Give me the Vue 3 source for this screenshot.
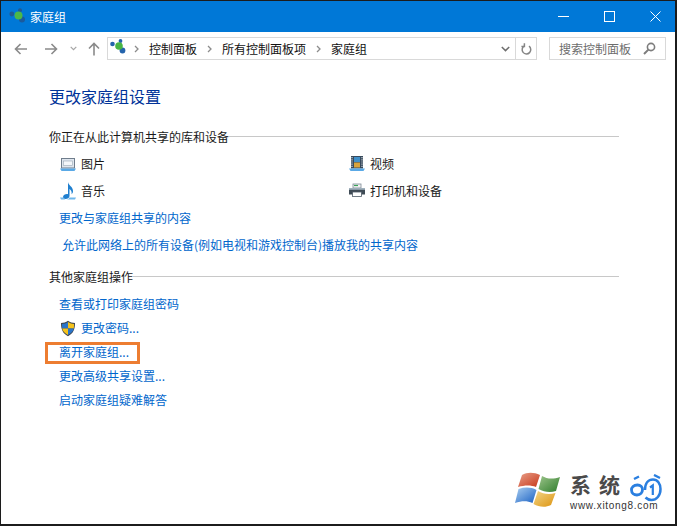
<script setup>
const crumbs = ['控制面板', '所有控制面板项', '家庭组']
</script>

<template>
  <div class="window">
    <header class="titlebar">
      <div class="title">
        <svg class="hg" width="18" height="16" viewBox="0 0 18 16">
          <circle cx="2.800" cy="6" r="2.400" fill="#1f5a94" />
          <circle cx="11" cy="2.300" r="2" fill="#1f5a94" />
          <circle cx="13" cy="11.500" r="3" fill="#1b5a9c" />
          <circle cx="9.500" cy="7.500" r="4" fill="#4cb848" />
        </svg>
        <span>家庭组</span>
      </div>
      <div class="controls">
        <div class="ctl"><svg width="11" height="11" viewBox="0 0 11 11"><path d="M0 5.500H11" stroke="#fff" /></svg></div>
        <div class="ctl"><svg width="11" height="11" viewBox="0 0 11 11"><rect x=".5" y=".5" width="10" height="10" fill="none" stroke="#fff" /></svg></div>
        <div class="ctl"><svg width="11" height="11" viewBox="0 0 11 11"><path d="M.5 .5L10.500 10.500M10.500 .5L.5 10.500" stroke="#fff" /></svg></div>
      </div>
    </header>

    <nav class="toolbar">
      <div class="navs">
        <svg width="14" height="12" viewBox="0 0 14 12"><path d="M13 6H1.500M6.500 1L1.500 6L6.500 11" fill="none" stroke="#8a8a8a" stroke-width="1.600" /></svg>
        <svg class="fw" width="14" height="12" viewBox="0 0 14 12"><path d="M1 6H12.500M7.500 1L12.500 6L7.500 11" fill="none" stroke="#8a8a8a" stroke-width="1.600" /></svg>
        <svg class="dn" width="7" height="5" viewBox="0 0 7 5"><path d="M.7 .8L3.500 3.600L6.300 .8" fill="none" stroke="#a5a5a5" stroke-width="1.200" /></svg>
        <svg class="up" width="12" height="14" viewBox="0 0 12 14"><path d="M6 13.500V1.500M1 6.500L6 1.500L11 6.500" fill="none" stroke="#8a8a8a" stroke-width="1.600" /></svg>
      </div>
      <div class="address">
        <svg class="hg2" width="17" height="16" viewBox="0 0 17 16">
          <circle cx="2.500" cy="5" r="2.300" fill="#2464ac" />
          <circle cx="10.500" cy="2" r="1.900" fill="#2464ac" />
          <circle cx="12.500" cy="11.500" r="2.900" fill="#2464ac" />
          <circle cx="9" cy="7" r="3.800" fill="#48b544" />
        </svg>
        <template v-for="c in crumbs" :key="c">
          <svg class="sep" width="5" height="8" viewBox="0 0 5 8"><path d="M1 1L4 4L1 7" fill="none" stroke="#8c8c8c" stroke-width="1.300" /></svg>
          <span class="crumb">{{ c }}</span>
        </template>
        <div class="spacer"></div>
        <svg class="chev" width="9" height="6" viewBox="0 0 9 6"><path d="M.8 1L4.500 4.600L8.200 1" fill="none" stroke="#6e6e6e" stroke-width="1.500" /></svg>
        <div class="refresh">
          <svg width="11" height="13" viewBox="0 0 11 13"><path d="M3.200 3.400A4.300 4.300 0 1 0 8 3.600M3.400 .6V4H.4" transform="translate(0 .6)" fill="none" stroke="#858585" stroke-width="1.500" /></svg>
        </div>
      </div>
      <div class="search">
        <span>搜索控制面板</span>
        <svg width="13" height="13" viewBox="0 0 13 13"><circle cx="8" cy="5" r="3.600" fill="none" stroke="#7d7d7d" stroke-width="1.600" /><path d="M5.400 7.600L1 12" stroke="#7d7d7d" stroke-width="2" /></svg>
      </div>
    </nav>

    <main class="content">
      <h1>更改家庭组设置</h1>

      <div class="section-head"><span>你正在从此计算机共享的库和设备</span><i></i></div>
      <div class="libs">
        <div class="lib">
          <svg width="16" height="16" viewBox="0 0 16 16">
            <rect x="1.500" y="2.500" width="13" height="9.500" fill="#dfe6ee" stroke="#6f7d8c" />
            <rect x="3.500" y="5" width="9" height="4.500" fill="#f4f7fa" stroke="#9aa7b5" stroke-width=".6" />
            <path d="M0 12.500H16L14.500 15H1.500Z" fill="#5aa9e6" />
          </svg>
          <span>图片</span>
        </div>
        <div class="lib">
          <svg width="16" height="16" viewBox="0 0 16 16">
            <rect x="2" y="0" width="12" height="12.500" fill="#384a5c" />
            <rect x="5" y="1" width="6" height="5" fill="#3f8fc9" />
            <rect x="5" y="6.500" width="6" height="5" fill="#d9a33a" />
            <path d="M3 1V12M13 1V12" stroke="#cfd6dd" stroke-width="1.200" stroke-dasharray="1.200 1" />
            <path d="M0 12.500H16L14.500 15H1.500Z" fill="#5aa9e6" />
          </svg>
          <span>视频</span>
        </div>
        <div class="lib">
          <svg width="16" height="18" viewBox="0 0 16 18">
            <path d="M8 0C8.500 3.500 13 4.500 13 9C13 10.500 12.500 11.500 11.500 12.200C12.300 9.500 10.500 7.500 9.500 7V14C9.500 15.800 7.500 17 5.500 17C4 17 3 16.200 3 15C3 13.200 5.200 12 7 12C7.500 12 7.800 12.100 8 12.200Z" fill="#1f7fcf" />
            <path d="M0 15.500H3.500C4 17 5 17.500 6 17.500H1Z" fill="#6fb7ec" />
            <path d="M9.500 15.500H16L15 17.500H6.500C8 17.500 9 16.800 9.500 15.500Z" fill="#6fb7ec" />
          </svg>
          <span>音乐</span>
        </div>
        <div class="lib">
          <svg width="16" height="15" viewBox="0 0 16 15">
            <rect x="4" y="1" width="8" height="4" fill="#f2f2f2" stroke="#7d8a96" stroke-width=".8" />
            <path d="M5 2.500H9" stroke="#3aa35a" stroke-width="1.200" />
            <rect x="0" y="5" width="16" height="6.500" fill="#3f4b55" />
            <rect x="0" y="5" width="16" height="1.800" fill="#9fb0bc" />
            <rect x="3.500" y="9" width="9" height="4.500" fill="#fff" stroke="#4f5b66" stroke-width=".8" />
          </svg>
          <span>打印机和设备</span>
        </div>
      </div>

      <a class="link single">更改与家庭组共享的内容</a>
      <a class="link wide">允许此网络上的所有设备(例如电视和游戏控制台)播放我的共享内容</a>

      <div class="section-head second"><span>其他家庭组操作</span><i></i></div>
      <div class="actions">
        <a class="link">查看或打印家庭组密码</a>
        <a class="link with-icon">
          <svg width="16" height="17" viewBox="0 0 16 17">
            <path d="M8 .8C10 2.200 12.500 3 15 3C15 9 13.500 13.500 8 16.200C2.500 13.500 1 9 1 3C3.500 3 6 2.200 8 .8Z" fill="#40464e" />
            <path d="M8 2V8.500H2.200C2 6.800 2 5.500 2 4C4 3.900 6.200 3.200 8 2Z" fill="#2a74c8" />
            <path d="M8 2C9.800 3.200 12 3.900 14 4C14 5.500 14 6.800 13.800 8.500H8Z" fill="#f5c21b" />
            <path d="M2.200 8.500H8V15C4.500 13.200 2.800 11.200 2.200 8.500Z" fill="#f5c21b" />
            <path d="M8 8.500H13.800C13.200 11.200 11.500 13.200 8 15Z" fill="#2a74c8" />
          </svg>
          <span>更改密码...</span>
        </a>
        <a class="link marked">离开家庭组...</a>
        <a class="link">更改高级共享设置...</a>
        <a class="link">启动家庭组疑难解答</a>
      </div>
    </main>

    <div class="watermark">
      <svg class="flag" width="46" height="36" viewBox="0 0 46 36">
        <defs>
          <linearGradient id="fr" x1="0" y1="0" x2="1" y2="1"><stop offset="0" stop-color="#e8a08a" /><stop offset="1" stop-color="#c8381a" /></linearGradient>
          <linearGradient id="fg" x1="0" y1="0" x2="1" y2="1"><stop offset="0" stop-color="#9cc48a" /><stop offset="1" stop-color="#2f7d2c" /></linearGradient>
          <linearGradient id="fb" x1="0" y1="0" x2="1" y2="1"><stop offset="0" stop-color="#a8cdf0" /><stop offset="1" stop-color="#1b62c4" /></linearGradient>
          <linearGradient id="fy" x1="0" y1="0" x2="1" y2="1"><stop offset="0" stop-color="#f2d68a" /><stop offset="1" stop-color="#dd9410" /></linearGradient>
        </defs>
        <path d="M7 3C12 0 19 0 25 3L21 15C16 13 10 13 3 15Z" fill="url(#fr)" />
        <path d="M27 4C32 7 38 7.500 45 5L41 19C35 21 29 20 23.500 17Z" fill="url(#fg)" />
        <path d="M2.500 17C9 15 15 15 20.500 18L16.500 31C11 28.500 6 28.500 -1 31Z" transform="translate(1 0)" fill="url(#fb)" />
        <path d="M23 19C28 22 34 23 40.500 21L36 33C30 36 24 35 18.500 32Z" fill="url(#fy)" />
      </svg>
      <div class="brand">
        <div class="brand-top">
          <span class="cn">系统</span>
          <svg class="mark" width="32" height="28" viewBox="0 0 32 28">
            <path d="M7.500 11C3.500 11 1.500 13.500 1.500 16C1.500 19 4 21 7 21C10.500 21 12.500 18.500 12.500 15.500C12.500 13 10.500 11 7.500 11Z" fill="none" stroke="#2a7fe0" stroke-width="2.800" />
            <path d="M15 16C15 9 18.500 5.500 23 5.500C27.500 5.500 30.500 9.500 30.500 15C30.500 21.500 26.500 26 21.500 26C19 26 17 25 15.500 23.500" fill="none" stroke="#2a7fe0" stroke-width="2.500" />
            <path d="M20 13.500L22.800 11.500V21" fill="none" stroke="#2a7fe0" stroke-width="2.200" />
            <path d="M4 5L9 2.500M24 1L30 4" stroke="#2a7fe0" stroke-width="2.400" />
          </svg>
        </div>
        <div class="url">www.xitong8.com</div>
      </div>
    </div>
  </div>
</template>

<style scoped>
.window {
  position: relative;
  width: 677px;
  height: 526px;
  box-sizing: border-box;
  border: 1px solid #1c1c1c;
  border-right-width: 2px;
  border-bottom-width: 2px;
  background: #fff;
  overflow: hidden;
  font-family: "Noto Sans CJK SC", "Noto Sans", sans-serif;
  font-size: 12px;
  color: #1a1a1a;
}
.titlebar {
  height: 31px;
  background: #0078d7;
  display: flex;
  align-items: center;
  justify-content: space-between;
  color: #fff;
}
.title {
  display: flex;
  align-items: center;
  gap: 3px;
  padding-left: 8px;
}
.hg { display: block; margin-top: -1px; }
.controls { display: flex; margin-right: -3px; }
.ctl {
  width: 46px;
  height: 31px;
  display: flex;
  align-items: center;
  justify-content: center;
}
.toolbar {
  height: 33px;
  display: flex;
  align-items: center;
}
.navs {
  width: 106px;
  display: flex;
  align-items: center;
  padding-left: 13px;
  box-sizing: border-box;
}
.fw { margin-left: 16px; }
.dn { margin-left: 12px; }
.up { margin-left: 11px; }
.address {
  width: 430px;
  height: 23px;
  box-sizing: border-box;
  border: 1px solid #d9d9d9;
  display: flex;
  align-items: center;
}
.hg2 { margin-left: 2px; margin-right: 7px; margin-top: -4px; }
.sep { margin-right: 10px; }
.crumb { margin-right: 10px; color: #111; }
.spacer { flex: 1; }
.chev { margin-right: 5px; }
.refresh {
  width: 20px;
  height: 100%;
  border-left: 1px solid #d9d9d9;
  display: flex;
  align-items: center;
  justify-content: center;
}
.search {
  width: 117px;
  height: 23px;
  box-sizing: border-box;
  margin-left: 12px;
  border: 1px solid #d9d9d9;
  display: flex;
  align-items: center;
  justify-content: space-between;
  padding: 0 9px;
  color: #6d6d6d;
}
.content {
  padding: 19px 0 0 48px;
  width: 570px;
}
h1 {
  margin: 0;
  height: 24px;
  line-height: 24px;
  font-size: 16px;
  font-weight: 400;
  color: #003399;
}
.section-head {
  margin-top: 16px;
  height: 24px;
  display: flex;
  align-items: center;
  color: #1a1a1a;
}
.section-head i {
  flex: 1;
  height: 1px;
  background: #c8c8c8;
}
.section-head.second { margin-top: 7px; }
.libs {
  display: grid;
  grid-template-columns: 289px 1fr;
  grid-auto-rows: 27px;
  padding-left: 11px;
  margin-top: 2px;
}
.lib {
  display: flex;
  align-items: center;
  gap: 5px;
  height: 27px;
}
.lib svg { flex: none; }
.link {
  display: block;
  color: #0066cc;
  line-height: 24px;
  height: 24px;
}
.single { margin: 2px 0 0 10px; }
.wide { margin: 3px 0 0 13px; }
.actions {
  padding-left: 10px;
  margin-top: 4px;
}
.with-icon {
  display: flex;
  align-items: center;
  gap: 5px;
}
.with-icon svg { margin-left: 1px; }
.marked {
  width: fit-content;
  position: relative;
}
.marked::after {
  content: "";
  position: absolute;
  left: -14px;
  top: 2px;
  width: 95px;
  height: 22px;
  box-sizing: border-box;
  border: 3px solid #ed7d31;
}
.watermark {
  position: absolute;
  right: 0;
  bottom: 13px;
  display: flex;
  align-items: flex-end;
  background: #fff;
  padding-right: 13px;
}
.flag { margin-right: 9px; margin-bottom: 3px; }
.brand-top { display: flex; align-items: flex-end; height: 29px; }
.cn {
  font-family: "Noto Sans CJK SC", sans-serif;
  font-size: 21px;
  line-height: 21px;
  letter-spacing: 8px;
  color: #4a4a4a;
  font-weight: 700;
  margin-right: 2px;
  margin-bottom: 5px;
}
.mark { margin-bottom: -2px; }
.url {
  font-family: "Liberation Sans", sans-serif;
  font-size: 10px;
  letter-spacing: .7px;
  line-height: 11px;
  color: #333;
}
</style>
<style>
html, body { margin: 0; padding: 0; background: #fff; }
</style>
